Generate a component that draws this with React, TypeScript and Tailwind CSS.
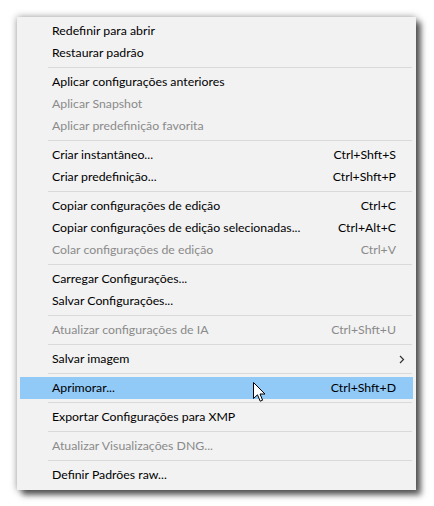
import React from "react";

type Item =
  | { type: "sep" }
  | { type: "item"; label: string; shortcut?: string; disabled?: boolean; active?: boolean; submenu?: boolean };

const items: Item[] = [
  { type: "item", label: "Redefinir para abrir" },
  { type: "item", label: "Restaurar padrão" },
  { type: "sep" },
  { type: "item", label: "Aplicar configurações anteriores" },
  { type: "item", label: "Aplicar Snapshot", disabled: true },
  { type: "item", label: "Aplicar predefinição favorita", disabled: true },
  { type: "sep" },
  { type: "item", label: "Criar instantâneo...", shortcut: "Ctrl+Shft+S" },
  { type: "item", label: "Criar predefinição...", shortcut: "Ctrl+Shft+P" },
  { type: "sep" },
  { type: "item", label: "Copiar configurações de edição", shortcut: "Ctrl+C" },
  { type: "item", label: "Copiar configurações de edição selecionadas...", shortcut: "Ctrl+Alt+C" },
  { type: "item", label: "Colar configurações de edição", shortcut: "Ctrl+V", disabled: true },
  { type: "sep" },
  { type: "item", label: "Carregar Configurações..." },
  { type: "item", label: "Salvar Configurações..." },
  { type: "sep" },
  { type: "item", label: "Atualizar configurações de IA", shortcut: "Ctrl+Shft+U", disabled: true },
  { type: "sep" },
  { type: "item", label: "Salvar imagem", submenu: true },
  { type: "sep" },
  { type: "item", label: "Aprimorar...", shortcut: "Ctrl+Shft+D", active: true },
  { type: "sep" },
  { type: "item", label: "Exportar Configurações para XMP" },
  { type: "sep" },
  { type: "item", label: "Atualizar Visualizações DNG...", disabled: true },
  { type: "sep" },
  { type: "item", label: "Definir Padrões raw..." },
];

function Cursor() {
  return (
    <svg width="13" height="21" viewBox="0 0 13 21" className="absolute left-[253px] top-[382px]">
      <path
        d="M0.5 0.5 L0.5 16.5 L4.5 12.8 L7.2 19.2 L9.6 18.2 L7 12 L12 12 Z"
        fill="#ffffff"
        stroke="#000000"
        strokeWidth="1"
        strokeLinejoin="miter"
      />
    </svg>
  );
}

export default function App() {
  return (
    <div
      className="relative w-[434px] h-[506px] bg-white pt-[17px] pl-[17px]"
      style={{ fontFamily: 'Lato, "Noto Sans", sans-serif' }}
    >
      <div className="w-[399px] h-[473px] bg-[#f2f2f2] pt-[3px] pb-[4px] flex flex-col shadow-[0_0_7px_rgba(0,0,0,0.4),5px_5px_6px_rgba(0,0,0,0.6)]">
        {items.map((it, i) =>
          it.type === "sep" ? (
            <div key={i} className="h-[7px] flex items-center pl-[31px] pr-[4px]">
              <div className="w-full h-[1px] bg-[#d9d9d9]" />
            </div>
          ) : (
            <div
              key={i}
              className={
                "h-[22px] mx-[3px] pl-[32px] pr-[17px] flex items-center justify-between whitespace-nowrap text-[12.3px] leading-none " +
                (it.active ? "bg-[#91c9f7] " : "") +
                (it.disabled ? "text-[#8a8a8a]" : "text-[#000000]")
              }
            >
              <span>{it.label}</span>
              {it.shortcut && <span>{it.shortcut}</span>}
              {it.submenu && (
                <svg width="6" height="9" viewBox="0 0 6 9" className="mr-[-9px]">
                  <path d="M1 1 L4.5 4.5 L1 8" fill="none" stroke="#333333" strokeWidth="1.2" />
                </svg>
              )}
            </div>
          )
        )}
      </div>
      <Cursor />
    </div>
  );
}
